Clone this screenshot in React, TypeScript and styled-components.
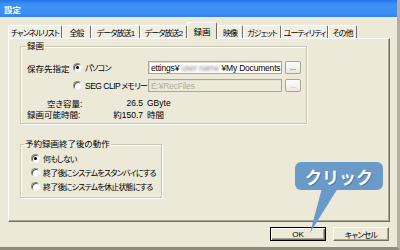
import React from "react";
import styled, { createGlobalStyle, css } from "styled-components";

const Global = createGlobalStyle`
  html, body { margin: 0; padding: 0; background: #ECE9D8; }
  #root { width: 400px; height: 250px; }
`;

const FONT = `"Liberation Sans", "Noto Sans CJK JP", sans-serif`;

const tight = css`
  font-size: 8px;
  letter-spacing: -0.8px;
`;

const Window = styled.div`
  position: relative;
  width: 400px;
  height: 250px;
  box-sizing: border-box;
  background: #ECE9D8;
  border-right: 3px solid #b4b1a2;
  border-bottom: 3px solid #8e8b7d;
  display: flex;
  flex-direction: column;
  overflow: hidden;
  font-family: ${FONT};
  font-size: 8.5px;
  font-feature-settings: "palt" 1;
  color: #000;
`;

const TitleBar = styled.div`
  height: 17px;
  flex: none;
  display: flex;
  align-items: center;
  padding-left: 4px;
  color: #fff;
  font-weight: bold;
  font-size: 8.5px;
  background: linear-gradient(#2474ea 0%, #3f90f6 25%, #3c8df5 75%, #3484ef 100%);
`;

const Body = styled.div`
  flex: 1;
  display: flex;
  flex-direction: column;
  padding: 5px 8px 0 8px;
`;

const TabRow = styled.div`
  display: flex;
  align-items: flex-end;
  height: 16px;
  position: relative;
  z-index: 1;
`;

const Tab = styled.div<{ $w: number; $active?: boolean }>`
  width: ${(p) => p.$w}px;
  height: ${(p) => (p.$active ? 17 : 13)}px;
  flex: none;
  box-sizing: border-box;
  display: flex;
  align-items: center;
  justify-content: center;
  border-left: 1px solid #fff;
  border-top: 1px solid #fff;
  border-right: 1px solid #716f64;
  border-radius: 2px 2px 0 0;
  background: ${(p) => (p.$active ? "#ECE9D8" : "#F1EFE4")};
  white-space: nowrap;
  font-size: 8px;
  letter-spacing: -0.9px;
  padding-top: ${(p) => (p.$active ? 0 : 1)}px;
  ${(p) =>
    p.$active &&
    css`
      margin-bottom: -1px;
      letter-spacing: 0;
      font-size: 8.5px;
    `}
`;

const Panel = styled.div`
  width: 382px;
  height: 184px;
  flex: none;
  box-sizing: border-box;
  border-left: 1px solid #fff;
  border-top: 1px solid #fff;
  border-right: 1px solid #716f64;
  border-bottom: 1px solid #716f64;
  box-shadow: inset -1px -1px 0 #aca899;
  padding: 2px 0 0 11px;
  display: flex;
  flex-direction: column;
  align-items: flex-start;
`;

const Group = styled.fieldset<{ $w: number; $mt?: number }>`
  width: ${(p) => p.$w}px;
  min-inline-size: 0;
  box-sizing: border-box;
  margin: ${(p) => p.$mt ?? 0}px 0 0 0;
  border: 1px solid #c9c6b6;
  box-shadow: 1px 1px 0 #fff, inset 1px 1px 0 #fff;
  padding: 0;
`;

const Legend = styled.legend<{ $ml: number }>`
  margin-left: ${(p) => p.$ml}px;
  padding: 0 1px;
  line-height: 11px;
  height: 11px;
`;

const GroupInner = styled.div<{ $pl: number; $pt: number; $pb: number }>`
  display: flex;
  flex-direction: column;
  padding: ${(p) => p.$pt}px 0 ${(p) => p.$pb}px ${(p) => p.$pl}px;
`;

const FormRow = styled.div<{ $indent?: number; $mt?: number }>`
  display: flex;
  align-items: center;
  height: 13px;
  margin-left: ${(p) => p.$indent ?? 0}px;
  margin-top: ${(p) => p.$mt ?? 0}px;
`;

const RowLabel = styled.span`
  width: 46px;
  flex: none;
  white-space: nowrap;
`;

const Option = styled.label<{ $w?: number; $h?: number }>`
  display: flex;
  align-items: center;
  gap: 3px;
  flex: none;
  width: ${(p) => (p.$w ? `${p.$w}px` : "auto")};
  height: ${(p) => p.$h ?? 13}px;
  white-space: nowrap;
`;

const OptionText = styled.span`
  ${tight}
`;

const Latin = styled.span`
  font-size: 8.5px;
  letter-spacing: -0.5px;
  margin-right: 1px;
`;

const Radio = styled.span<{ $checked?: boolean }>`
  position: relative;
  width: 7px;
  height: 7px;
  flex: none;
  border-radius: 50%;
  background: #fff;
  border: 1px solid;
  border-color: #8d8a7b #f4f3ee #f4f3ee #8d8a7b;
  box-shadow: inset 1px 1px 0 #5c5a50;
  &::after {
    content: "";
    display: ${(p) => (p.$checked ? "block" : "none")};
    position: absolute;
    left: 2px;
    top: 2px;
    width: 3px;
    height: 3px;
    border-radius: 50%;
    background: #000;
  }
`;

const PathBox = styled.div<{ $disabled?: boolean }>`
  width: 134px;
  height: 13px;
  flex: none;
  box-sizing: border-box;
  border: 1px solid #aaa79a;
  box-shadow: inset 1px 1px 0 #e2dfd2;
  background: ${(p) => (p.$disabled ? "#ECE9D8" : "#fff")};
  color: ${(p) => (p.$disabled ? "#b0ad9f" : "#000")};
  display: flex;
  align-items: center;
  padding-left: 2px;
  letter-spacing: -0.2px;
  white-space: nowrap;
  overflow: hidden;
`;

const Blurred = styled.span`
  display: inline-block;
  flex: none;
  padding: 0 2px;
  color: #8a8a8a;
  filter: blur(1.2px);
`;

const Browse = styled.button<{ $disabled?: boolean }>`
  width: 16px;
  height: 13px;
  flex: none;
  margin-left: 3px;
  box-sizing: border-box;
  padding: 0 0 2px 0;
  border: 1px solid #a8a597;
  border-radius: 2px;
  background: linear-gradient(#fdfdfb, #ebe8dc);
  font-family: ${FONT};
  font-size: 7px;
  line-height: 7px;
  color: ${(p) => (p.$disabled ? "#b0ad9f" : "#000")};
  display: flex;
  align-items: flex-end;
  justify-content: center;
`;

const InfoGrid = styled.div`
  display: grid;
  grid-template-columns: 70px 42px auto;
  grid-auto-rows: 11px;
  column-gap: 4px;
  align-items: center;
  margin-top: 5px;
`;

const InfoLabel = styled.span<{ $pl?: number }>`
  padding-left: ${(p) => p.$pl ?? 0}px;
  white-space: nowrap;
`;

const InfoValue = styled.span`
  text-align: right;
  white-space: nowrap;
`;

const ButtonRow = styled.div`
  display: flex;
  justify-content: flex-end;
  gap: 7px;
  margin-top: 5px;
`;

const DlgButton = styled.button<{ $default?: boolean }>`
  width: 56px;
  height: 14px;
  box-sizing: border-box;
  padding: 0;
  font-family: ${FONT};
  font-feature-settings: "palt" 1;
  ${tight}
  background: #ECE9D8;
  border: 1px solid;
  border-color: #fff #716f64 #716f64 #fff;
  box-shadow: inset -1px -1px 0 #aca899;
  display: flex;
  align-items: center;
  justify-content: center;
  ${(p) =>
    p.$default &&
    css`
      letter-spacing: 0;
      border: 1px solid #000;
      box-shadow: inset 1px 1px 0 #fff, inset -1px -1px 0 #716f64, inset -2px -2px 0 #aca899;
    `}
`;

const Callout = styled.div`
  position: absolute;
  left: 295px;
  top: 162px;
  width: 88px;
  height: 28px;
`;

const Bubble = styled.div`
  position: relative;
  z-index: 1;
  width: 100%;
  height: 100%;
  border-radius: 6px;
  background: #6a9bc8;
  color: #fff;
  font-family: "Noto Sans CJK JP", sans-serif;
  font-weight: bold;
  font-size: 17px;
  font-feature-settings: normal;
  display: flex;
  align-items: center;
  justify-content: center;
  text-shadow: 1px 1px 0 rgba(40, 70, 110, 0.45);
`;

const Tail = styled.svg`
  position: absolute;
  left: 0;
  top: 26px;
  overflow: visible;
`;

const tabs: { label: string; w: number; active?: boolean }[] = [
  { label: "チャンネルリスト", w: 54 },
  { label: "全般", w: 29 },
  { label: "データ放送1", w: 49 },
  { label: "データ放送2", w: 47 },
  { label: "録画", w: 30, active: true },
  { label: "映像", w: 26 },
  { label: "ガジェット", w: 38 },
  { label: "ユーティリティ", w: 47 },
  { label: "その他", w: 29 },
];

export default function App() {
  return (
    <>
      <Global />
      <Window>
        <TitleBar>設定</TitleBar>
        <Body>
          <TabRow>
            {tabs.map((t) => (
              <Tab key={t.label} $w={t.w} $active={t.active}>
                {t.label}
              </Tab>
            ))}
          </TabRow>
          <Panel>
            <Group $w={287}>
              <Legend $ml={5}>録画</Legend>
              <GroupInner $pl={6} $pt={9} $pb={4}>
                <FormRow>
                  <RowLabel>保存先指定</RowLabel>
                  <Option $w={75}>
                    <Radio $checked />
                    <OptionText>パソコン</OptionText>
                  </Option>
                  <PathBox>
                    ettings¥<Blurred>user name</Blurred>¥My Documents
                  </PathBox>
                  <Browse>...</Browse>
                </FormRow>
                <FormRow $indent={46} $mt={5}>
                  <Option $w={75}>
                    <Radio />
                    <OptionText>
                      <Latin>SEG CLIP</Latin>メモリー
                    </OptionText>
                  </Option>
                  <PathBox $disabled>E:¥RecFiles</PathBox>
                  <Browse $disabled>...</Browse>
                </FormRow>
                <InfoGrid>
                  <InfoLabel $pl={20}>空き容量:</InfoLabel>
                  <InfoValue>26.5</InfoValue>
                  <span>GByte</span>
                  <InfoLabel>録画可能時間:</InfoLabel>
                  <InfoValue>約150.7</InfoValue>
                  <span>時間</span>
                </InfoGrid>
              </GroupInner>
            </Group>
            <Group $w={142} $mt={15}>
              <Legend $ml={3}>予約録画終了後の動作</Legend>
              <GroupInner $pl={10} $pt={1} $pb={4}>
                <Option $h={14}>
                  <Radio $checked />
                  <OptionText>何もしない</OptionText>
                </Option>
                <Option $h={14}>
                  <Radio />
                  <OptionText>終了後にシステムをスタンバイにする</OptionText>
                </Option>
                <Option $h={14}>
                  <Radio />
                  <OptionText>終了後にシステムを休止状態にする</OptionText>
                </Option>
              </GroupInner>
            </Group>
          </Panel>
          <ButtonRow>
            <DlgButton $default>OK</DlgButton>
            <DlgButton>キャンセル</DlgButton>
          </ButtonRow>
        </Body>
        <Callout>
          <Bubble>クリック</Bubble>
          <Tail width="50" height="46">
            <polygon points="27,0 43,0 15,45" fill="#6a9bc8" />
          </Tail>
        </Callout>
      </Window>
    </>
  );
}
